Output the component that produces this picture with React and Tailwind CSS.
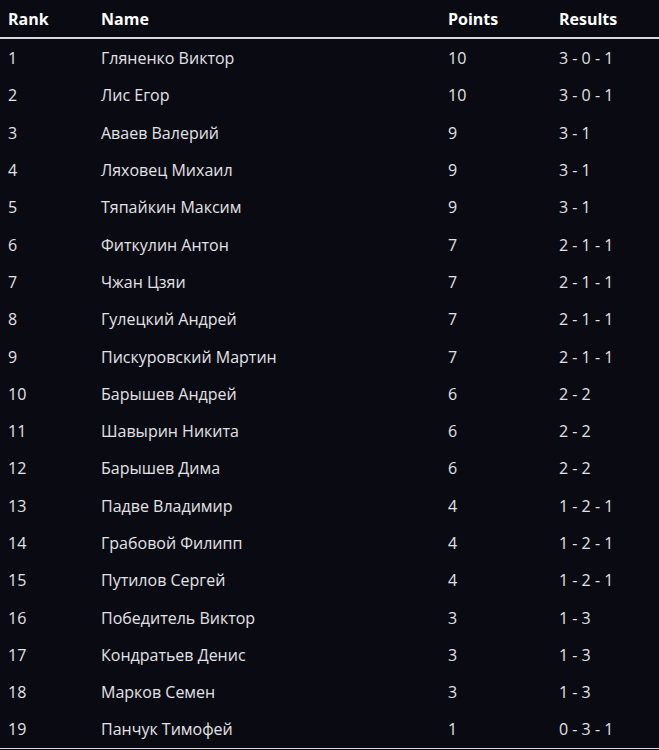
import React from 'react'

const players = [
  ['1', 'Гляненко Виктор', '10', '3 - 0 - 1'],
  ['2', 'Лис Егор', '10', '3 - 0 - 1'],
  ['3', 'Аваев Валерий', '9', '3 - 1'],
  ['4', 'Ляховец Михаил', '9', '3 - 1'],
  ['5', 'Тяпайкин Максим', '9', '3 - 1'],
  ['6', 'Фиткулин Антон', '7', '2 - 1 - 1'],
  ['7', 'Чжан Цзяи', '7', '2 - 1 - 1'],
  ['8', 'Гулецкий Андрей', '7', '2 - 1 - 1'],
  ['9', 'Пискуровский Мартин', '7', '2 - 1 - 1'],
  ['10', 'Барышев Андрей', '6', '2 - 2'],
  ['11', 'Шавырин Никита', '6', '2 - 2'],
  ['12', 'Барышев Дима', '6', '2 - 2'],
  ['13', 'Падве Владимир', '4', '1 - 2 - 1'],
  ['14', 'Грабовой Филипп', '4', '1 - 2 - 1'],
  ['15', 'Путилов Сергей', '4', '1 - 2 - 1'],
  ['16', 'Победитель Виктор', '3', '1 - 3'],
  ['17', 'Кондратьев Денис', '3', '1 - 3'],
  ['18', 'Марков Семен', '3', '1 - 3'],
  ['19', 'Панчук Тимофей', '1', '0 - 3 - 1'],
]

const cols = 'grid grid-cols-[93px_347px_111px_1fr] items-center'

const App = () => {
  return (
    <div className="w-[659px] h-[750px] bg-[#0a0a12] font-['Open_Sans',sans-serif] text-[16px]">
      {/* header */}
      <div className={`${cols} h-[39px] border-b-2 border-[#d6d8dc] text-white font-bold`}>
        <div className="pl-[8px]">Rank</div>
        <div className="pl-[8px]">Name</div>
        <div className="pl-[8px]">Points</div>
        <div className="pl-[8px]">Results</div>
      </div>

      {/* rows */}
      <div className="border-b border-[#d6d8dc] text-[#e2e2e6]">
        {players.map((p) => (
          <div key={p[0]} className={`${cols} h-[37.3px] pt-[1px]`}>
            <div className="pl-[8px]">{p[0]}</div>
            <div className="pl-[8px]">{p[1]}</div>
            <div className="pl-[8px]">{p[2]}</div>
            <div className="pl-[8px]">{p[3]}</div>
          </div>
        ))}
      </div>
    </div>
  )
}

export default App
